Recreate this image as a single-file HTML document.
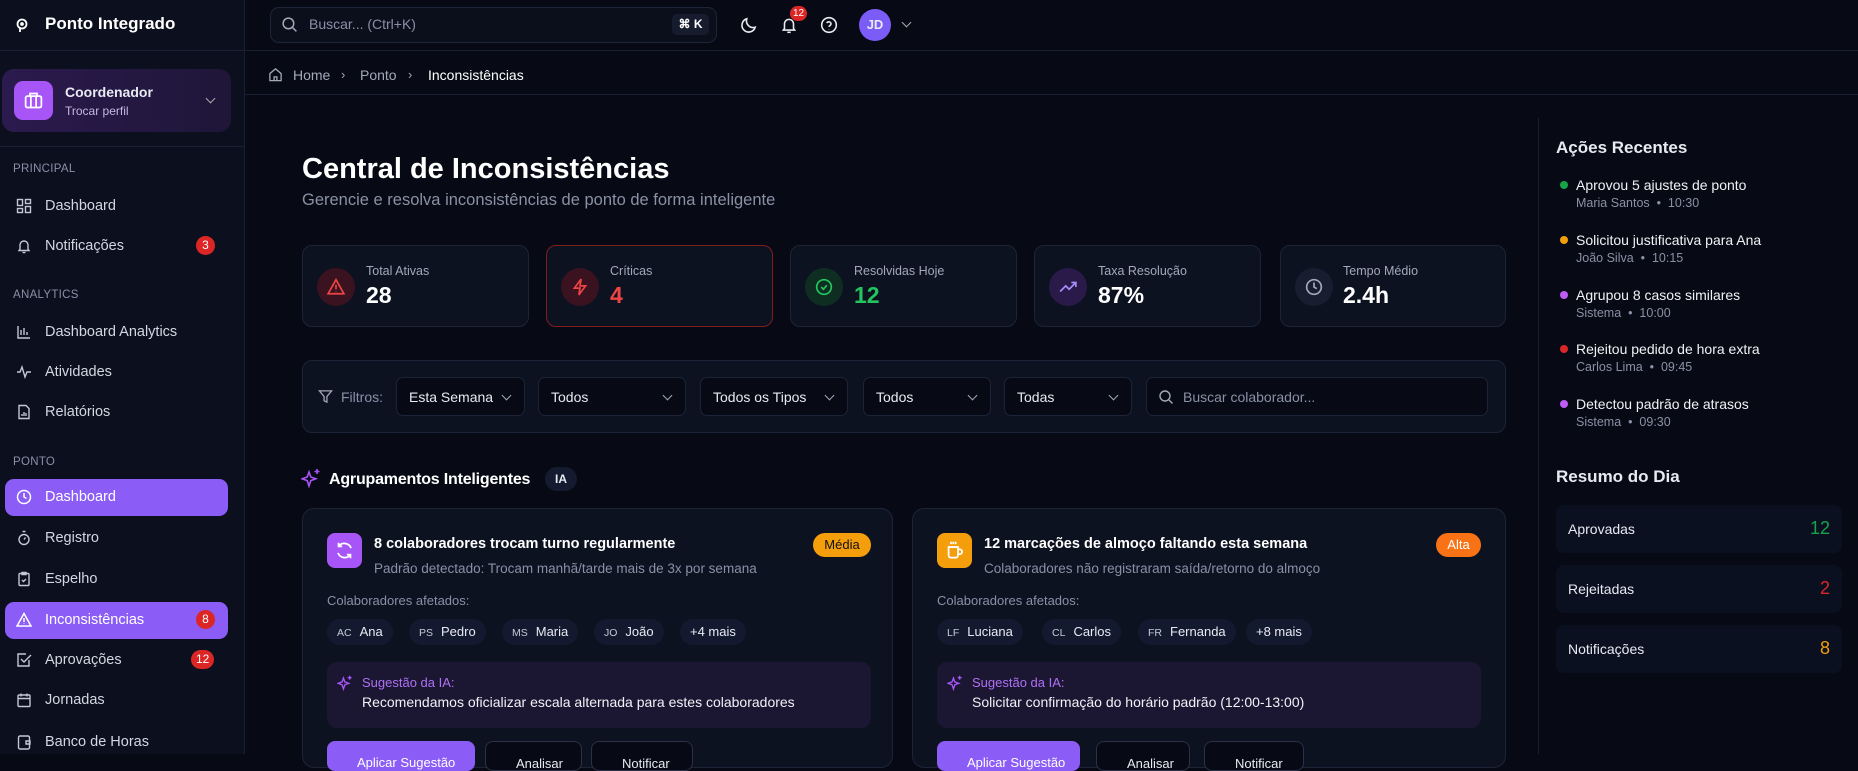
<!DOCTYPE html>
<html><head><meta charset="utf-8">
<style>
*{box-sizing:border-box;margin:0;padding:0}
body{width:1858px;height:754px;overflow:hidden;background:#070a14;font-family:"Liberation Sans",sans-serif;color:#e8eaf2;position:relative}
.a{position:absolute}
.sb{left:0;top:0;width:245px;height:754px;background:#0b0f1e;border-right:1px solid #1a2033}
.nav{position:absolute;left:0;width:245px;font-size:14.5px;color:#d4d7e2;display:flex;align-items:center}
.nav svg{position:absolute;left:16px}
.nav span{position:absolute;left:45px}
.sec{position:absolute;left:13px;font-size:11.5px;color:#8a90a6;letter-spacing:.3px}
.badge{position:absolute;background:#dc2626;color:#fff;border-radius:10px;font-size:12px;height:19px;min-width:19px;text-align:center;line-height:19px;padding:0 5px}
.pill{position:absolute;left:5px;width:223px;height:37px;background:#8b5cf6;border-radius:9px}
.card{position:absolute;background:#0d1221;border:1px solid #1d2438;border-radius:10px}
.ic{position:absolute;border-radius:50%;width:38px;height:38px;display:flex;align-items:center;justify-content:center}
.lab{position:absolute;font-size:12.5px;color:#a3a8ba}
.val{position:absolute;font-size:23px;font-weight:bold}
.dd{position:absolute;top:377px;height:39px;background:#070a14;border:1px solid #1d2438;border-radius:7px;font-size:14px;color:#e8eaf2;padding:11px 12px}
.dd.c:after{content:"";position:absolute;right:14px;top:14px;width:6px;height:6px;border-right:1.5px solid #a3a8ba;border-bottom:1.5px solid #a3a8ba;transform:rotate(45deg)}
.chip{position:absolute;top:619px;height:26px;background:#131a30;border-radius:13px;font-size:13px;color:#e8eaf2;line-height:26px;padding:0 10px;white-space:nowrap}
.chip b{font-weight:normal;font-size:10.5px;color:#c6c9d6;margin-right:8px}
.rs{position:absolute;left:1556px;width:286px;height:48px;background:#0b1020;border-radius:8px;font-size:14px;padding:16px 12px;color:#e8eaf2}
.rs i{position:absolute;right:12px;top:13px;font-style:normal;font-size:18px}
.act{position:absolute;left:1560px}
.act .d{position:absolute;left:0;top:4px;width:8px;height:8px;border-radius:50%}
.act .t{position:absolute;left:16px;top:0;font-size:14px;white-space:nowrap;color:#f1f2f6}
.act .s{position:absolute;left:16px;top:19px;font-size:12.5px;white-space:nowrap;color:#8a90a6}
.btn{position:absolute;top:741px;height:30px;border-radius:8px;font-size:13px;padding:14px 0 0 30px;white-space:nowrap;overflow:hidden}
.bo{border:1px solid #2a3148;background:#070a14}
</style></head><body>

<div class="a sb"></div>
<svg class="a" style="left:14px;top:17px" width="16" height="16" viewBox="0 0 16 16" fill="none" stroke="#fff" stroke-width="1.8"><circle cx="8" cy="7" r="4.5"/><circle cx="8" cy="7" r="1" fill="#fff"/><path d="M6 11v4"/></svg>
<div class="a" style="left:45px;top:14px;font-size:17px;font-weight:bold;color:#fff">Ponto Integrado</div>
<div class="a" style="left:0;top:50px;width:245px;border-top:1px solid #1a2033"></div>
<div class="a" style="left:2px;top:69px;width:229px;height:63px;border-radius:12px;background:linear-gradient(90deg,#2b1a4e,#1f1638)"></div>
<div class="a" style="left:14px;top:81px;width:39px;height:39px;border-radius:9px;background:#a855f7"></div>
<svg class="a" style="left:23px;top:90px" width="21" height="21" viewBox="0 0 24 24" fill="none" stroke="#fff" stroke-width="2"><rect x="3" y="7" width="18" height="13" rx="2"/><path d="M8 7V4h8v3M9 7v13M15 7v13"/></svg>
<div class="a" style="left:65px;top:84px;font-size:14px;font-weight:bold">Coordenador</div>
<div class="a" style="left:65px;top:104px;font-size:12px;color:#c3b8e0">Trocar perfil</div>
<div class="a" style="left:207px;top:95px;width:7px;height:7px;border-right:1.5px solid #aaa;border-bottom:1.5px solid #aaa;transform:rotate(45deg)"></div>
<div class="a" style="left:0;top:146px;width:245px;border-top:1px solid #1a2033"></div>

<div class="sec" style="top:163px">PRINCIPAL</div>
<div class="nav" style="top:196px;height:20px"><svg width="16" height="16" viewBox="0 0 16 16" fill="none" stroke="#c4c8d4" stroke-width="1.4"><rect x="1.5" y="1.5" width="5" height="6"/><rect x="9.5" y="1.5" width="5" height="4"/><rect x="1.5" y="10.5" width="5" height="4"/><rect x="9.5" y="8.5" width="5" height="6"/></svg><span>Dashboard</span></div>
<div class="nav" style="top:236px;height:20px"><svg width="16" height="16" viewBox="0 0 16 16" fill="none" stroke="#c4c8d4" stroke-width="1.4"><path d="M4 11V7a4 4 0 018 0v4l1 1.5H3z"/><path d="M6.5 14.5h3"/></svg><span>Notificações</span></div>
<div class="badge" style="left:196px;top:236px">3</div>
<div class="sec" style="top:289px">ANALYTICS</div>
<div class="nav" style="top:322px;height:20px"><svg width="16" height="16" viewBox="0 0 16 16" fill="none" stroke="#c4c8d4" stroke-width="1.4"><path d="M2 2v12h12M5 11V6M8 11V4M11 11V8"/></svg><span>Dashboard Analytics</span></div>
<div class="nav" style="top:362px;height:20px"><svg width="16" height="16" viewBox="0 0 16 16" fill="none" stroke="#c4c8d4" stroke-width="1.4"><path d="M1 8h3l2-5 3 10 2-5h4"/></svg><span>Atividades</span></div>
<div class="nav" style="top:402px;height:20px"><svg width="16" height="16" viewBox="0 0 16 16" fill="none" stroke="#c4c8d4" stroke-width="1.4"><path d="M3 1.5h7l3 3v10H3z"/><path d="M6 12v-2M8 12V8M10 12v-3"/></svg><span>Relatórios</span></div>
<div class="sec" style="top:456px">PONTO</div>
<div class="pill" style="top:479px"></div>
<div class="nav" style="top:487px;height:20px;color:#fff"><svg width="16" height="16" viewBox="0 0 16 16" fill="none" stroke="#fff" stroke-width="1.5"><circle cx="8" cy="8" r="6.5"/><path d="M8 4v4l2.5 1.5"/></svg><span>Dashboard</span></div>
<div class="nav" style="top:528px;height:20px"><svg width="16" height="16" viewBox="0 0 16 16" fill="none" stroke="#c4c8d4" stroke-width="1.4"><circle cx="8" cy="9.5" r="5"/><path d="M6.5 1.5h3M8 9.5l1.5-2"/></svg><span>Registro</span></div>
<div class="nav" style="top:569px;height:20px"><svg width="16" height="16" viewBox="0 0 16 16" fill="none" stroke="#c4c8d4" stroke-width="1.4"><rect x="3" y="2.5" width="10" height="12" rx="1"/><path d="M6 1.5h4v2H6zM6 9l1.5 1.5L10 8"/></svg><span>Espelho</span></div>
<div class="pill" style="top:602px"></div>
<div class="nav" style="top:610px;height:20px;color:#fff"><svg width="16" height="16" viewBox="0 0 16 16" fill="none" stroke="#fff" stroke-width="1.5"><path d="M8 1.5l7 12.5H1z"/><path d="M8 6v4M8 11.5v.5"/></svg><span>Inconsistências</span></div>
<div class="badge" style="left:196px;top:610px">8</div>
<div class="nav" style="top:650px;height:20px"><svg width="16" height="16" viewBox="0 0 16 16" fill="none" stroke="#c4c8d4" stroke-width="1.4"><path d="M13 8v6H2V2h8"/><path d="M5 7l3 3 7-7"/></svg><span>Aprovações</span></div>
<div class="badge" style="left:191px;top:650px">12</div>
<div class="nav" style="top:690px;height:20px"><svg width="16" height="16" viewBox="0 0 16 16" fill="none" stroke="#c4c8d4" stroke-width="1.4"><rect x="2" y="3" width="12" height="11.5" rx="1"/><path d="M2 6.5h12M5 1.5v3M11 1.5v3"/></svg><span>Jornadas</span></div>
<div class="nav" style="top:732px;height:20px"><svg width="16" height="16" viewBox="0 0 16 16" fill="none" stroke="#c4c8d4" stroke-width="1.4"><rect x="2.5" y="2" width="11" height="13" rx="1.5"/><path d="M10 7h4v3h-4z"/></svg><span>Banco de Horas</span></div>

<div class="a" style="left:245px;top:50px;width:1613px;border-top:1px solid #1a2033"></div>
<div class="a" style="left:270px;top:7px;width:447px;height:36px;border:1px solid #1f2538;border-radius:9px;background:#0b0f1c"></div>
<svg class="a" style="left:281px;top:16px" width="17" height="17" viewBox="0 0 16 16" fill="none" stroke="#a3a8ba" stroke-width="1.4"><circle cx="7" cy="7" r="5"/><path d="M11 11l3.5 3.5"/></svg>
<div class="a" style="left:309px;top:16px;font-size:14px;color:#8a90a6">Buscar... (Ctrl+K)</div>
<div class="a" style="left:672px;top:14px;width:37px;height:21px;background:#161c2e;border-radius:5px;font-size:12px;color:#fff;text-align:center;line-height:21px;font-weight:bold">⌘ K</div>
<svg class="a" style="left:740px;top:16px" width="18" height="18" viewBox="0 0 16 16" fill="none" stroke="#e8eaf2" stroke-width="1.4"><path d="M13.5 10A6 6 0 016 2.5a6 6 0 107.5 7.5z"/></svg>
<svg class="a" style="left:780px;top:16px" width="18" height="18" viewBox="0 0 16 16" fill="none" stroke="#e8eaf2" stroke-width="1.4"><path d="M4 11V7a4 4 0 018 0v4l1 1.5H3z"/><path d="M6.5 14.5h3"/></svg>
<div class="a" style="left:790px;top:6px;width:17px;height:15px;border-radius:8px;background:#dc2626;font-size:10px;text-align:center;line-height:15px;color:#fff">12</div>
<svg class="a" style="left:820px;top:16px" width="18" height="18" viewBox="0 0 16 16" fill="none" stroke="#e8eaf2" stroke-width="1.4"><circle cx="8" cy="8" r="6.5"/><path d="M6 6.3a2 2 0 013.8.7c0 1.3-1.8 1.5-1.8 2.7M8 11.5v.3"/></svg>
<div class="a" style="left:859px;top:9px;width:32px;height:32px;border-radius:50%;background:#7c5cf6;font-size:13px;font-weight:bold;text-align:center;line-height:32px">JD</div>
<div class="a" style="left:903px;top:19px;width:7px;height:7px;border-right:1.5px solid #aaa;border-bottom:1.5px solid #aaa;transform:rotate(45deg)"></div>

<svg class="a" style="left:268px;top:67px" width="15" height="15" viewBox="0 0 16 16" fill="none" stroke="#a3a8ba" stroke-width="1.4"><path d="M2 7l6-5 6 5v7.5H2zM6.5 14.5v-4h3v4"/></svg>
<div class="a" style="left:293px;top:67px;font-size:14px;color:#a3a8ba">Home</div>
<div class="a" style="left:341px;top:67px;font-size:13px;color:#a3a8ba">›</div>
<div class="a" style="left:360px;top:67px;font-size:14px;color:#a3a8ba">Ponto</div>
<div class="a" style="left:408px;top:67px;font-size:13px;color:#a3a8ba">›</div>
<div class="a" style="left:428px;top:67px;font-size:14px;color:#fff">Inconsistências</div>
<div class="a" style="left:245px;top:94px;width:1613px;border-top:1px solid #1a2033"></div>

<div class="a" style="left:1538px;top:118px;height:636px;border-left:1px solid #1a2033"></div>
<div class="a" style="left:1556px;top:138px;font-size:17px;font-weight:bold">Ações Recentes</div>
<div class="act" style="top:177px"><div class="d" style="background:#16a34a"></div><div class="t">Aprovou 5 ajustes de ponto</div><div class="s">Maria Santos &nbsp;•&nbsp; 10:30</div></div>
<div class="act" style="top:232px"><div class="d" style="background:#f59e0b"></div><div class="t">Solicitou justificativa para Ana</div><div class="s">João Silva &nbsp;•&nbsp; 10:15</div></div>
<div class="act" style="top:287px"><div class="d" style="background:#c05cf6"></div><div class="t">Agrupou 8 casos similares</div><div class="s">Sistema &nbsp;•&nbsp; 10:00</div></div>
<div class="act" style="top:341px"><div class="d" style="background:#dc2626"></div><div class="t">Rejeitou pedido de hora extra</div><div class="s">Carlos Lima &nbsp;•&nbsp; 09:45</div></div>
<div class="act" style="top:396px"><div class="d" style="background:#c05cf6"></div><div class="t">Detectou padrão de atrasos</div><div class="s">Sistema &nbsp;•&nbsp; 09:30</div></div>
<div class="a" style="left:1556px;top:467px;font-size:17px;font-weight:bold">Resumo do Dia</div>
<div class="rs" style="top:505px">Aprovadas<i style="color:#16a34a">12</i></div>
<div class="rs" style="top:565px">Rejeitadas<i style="color:#dc2626">2</i></div>
<div class="rs" style="top:625px">Notificações<i style="color:#f59e0b">8</i></div>

<div class="a" style="left:302px;top:153px;font-size:29px;font-weight:bold;color:#fff">Central de Inconsistências</div>
<div class="a" style="left:302px;top:191px;font-size:16.5px;color:#8a90a6">Gerencie e resolva inconsistências de ponto de forma inteligente</div>

<div class="card" style="left:302px;top:245px;width:227px;height:82px"></div>
<div class="ic" style="left:317px;top:268px;background:#3a1220"><svg width="18" height="18" viewBox="0 0 16 16" fill="none" stroke="#ef4444" stroke-width="1.5"><path d="M8 1.5l7 12.5H1z"/><path d="M8 6v4M8 11.5v.5"/></svg></div>
<div class="lab" style="left:366px;top:264px">Total Ativas</div><div class="val" style="left:366px;top:282px;color:#fff">28</div>

<div class="card" style="left:546px;top:245px;width:227px;height:82px;border-color:#7f1d1d"></div>
<div class="ic" style="left:561px;top:268px;background:#3a1220"><svg width="18" height="18" viewBox="0 0 16 16" fill="none" stroke="#ef4444" stroke-width="1.5"><path d="M9 1L3 9h5l-1 6 6-8H8z"/></svg></div>
<div class="lab" style="left:610px;top:264px">Críticas</div><div class="val" style="left:610px;top:282px;color:#ef4444">4</div>

<div class="card" style="left:790px;top:245px;width:227px;height:82px"></div>
<div class="ic" style="left:805px;top:268px;background:#0f2e22"><svg width="18" height="18" viewBox="0 0 16 16" fill="none" stroke="#22c55e" stroke-width="1.5"><circle cx="8" cy="8" r="6.5"/><path d="M5.5 8l2 2 3-3.5"/></svg></div>
<div class="lab" style="left:854px;top:264px">Resolvidas Hoje</div><div class="val" style="left:854px;top:282px;color:#22c55e">12</div>

<div class="card" style="left:1034px;top:245px;width:227px;height:82px"></div>
<div class="ic" style="left:1049px;top:268px;background:#2a1a4a"><svg width="18" height="18" viewBox="0 0 16 16" fill="none" stroke="#a78bfa" stroke-width="1.5"><path d="M1 12l5-5 3 3 6-6M11 4h4v4"/></svg></div>
<div class="lab" style="left:1098px;top:264px">Taxa Resolução</div><div class="val" style="left:1098px;top:282px;color:#fff">87%</div>

<div class="card" style="left:1280px;top:245px;width:226px;height:82px"></div>
<div class="ic" style="left:1295px;top:268px;background:#181e30"><svg width="18" height="18" viewBox="0 0 16 16" fill="none" stroke="#a3a8ba" stroke-width="1.5"><circle cx="8" cy="8" r="6.5"/><path d="M8 4v4l2.5 1.5"/></svg></div>
<div class="lab" style="left:1343px;top:264px">Tempo Médio</div><div class="val" style="left:1343px;top:282px;color:#fff">2.4h</div>

<div class="card" style="left:302px;top:360px;width:1204px;height:73px"></div>
<svg class="a" style="left:318px;top:389px" width="15" height="15" viewBox="0 0 16 16" fill="none" stroke="#a3a8ba" stroke-width="1.4"><path d="M1.5 2h13l-5 6v6l-3-1.5V8z"/></svg>
<div class="a" style="left:341px;top:389px;font-size:14px;color:#8a90a6">Filtros:</div>
<div class="dd c" style="left:396px;width:129px">Esta Semana</div>
<div class="dd c" style="left:538px;width:148px">Todos</div>
<div class="dd c" style="left:700px;width:148px">Todos os Tipos</div>
<div class="dd c" style="left:863px;width:128px">Todos</div>
<div class="dd c" style="left:1004px;width:128px">Todas</div>
<div class="dd" style="left:1146px;width:342px;padding-left:36px;color:#8a90a6">Buscar colaborador...</div>
<svg class="a" style="left:1158px;top:389px" width="16" height="16" viewBox="0 0 16 16" fill="none" stroke="#a3a8ba" stroke-width="1.4"><circle cx="7" cy="7" r="5"/><path d="M11 11l3.5 3.5"/></svg>

<svg class="a" style="left:301px;top:468px" width="20" height="22" viewBox="0 0 20 22" fill="none" stroke="#a855f7" stroke-width="1.6"><path d="M8 4l1.8 5 5 1.8-5 1.8L8 18l-1.8-5.4-5-1.8 5-1.8z"/><path d="M16 1v5M13.5 3.5h5"/></svg>
<div class="a" style="left:329px;top:471px;font-size:16px;font-weight:bold;color:#fff;letter-spacing:-.2px">Agrupamentos Inteligentes</div>
<div class="a" style="left:545px;top:467px;width:32px;height:24px;border-radius:12px;background:#141b30;font-size:12px;font-weight:bold;text-align:center;line-height:24px">IA</div>

<div class="card" style="left:302px;top:508px;width:591px;height:260px;border-radius:12px"></div>
<div class="a" style="left:327px;top:533px;width:35px;height:35px;border-radius:8px;background:#a855f7"></div>
<svg class="a" style="left:335px;top:541px" width="19" height="19" viewBox="0 0 16 16" fill="none" stroke="#fff" stroke-width="1.5"><path d="M13.5 6A6 6 0 003 4.5M2.5 10A6 6 0 0013 11.5M3 1.5v3h3M13 14.5v-3h-3"/></svg>
<div class="a" style="left:374px;top:536px;font-size:14.5px;font-weight:bold;color:#fff">8 colaboradores trocam turno regularmente</div>
<div class="a" style="left:374px;top:561px;font-size:13.5px;color:#8a90a6">Padrão detectado: Trocam manhã/tarde mais de 3x por semana</div>
<div class="a" style="left:813px;top:533px;width:58px;height:24px;border-radius:12px;background:#f59e0b;color:#111;font-size:13px;text-align:center;line-height:24px">Média</div>
<div class="a" style="left:327px;top:593px;font-size:13px;color:#8a90a6">Colaboradores afetados:</div>
<div class="chip" style="left:327px"><b>AC</b>Ana</div>
<div class="chip" style="left:409px"><b>PS</b>Pedro</div>
<div class="chip" style="left:502px"><b>MS</b>Maria</div>
<div class="chip" style="left:594px"><b>JO</b>João</div>
<div class="chip" style="left:680px">+4 mais</div>
<div class="a" style="left:327px;top:662px;width:544px;height:66px;border-radius:10px;background:#1b1733"></div>
<svg class="a" style="left:337px;top:675px" width="16" height="17" viewBox="0 0 20 22" fill="none" stroke="#a855f7" stroke-width="1.8"><path d="M8 4l1.8 5 5 1.8-5 1.8L8 18l-1.8-5.4-5-1.8 5-1.8z"/><path d="M16 1v5M13.5 3.5h5"/></svg>
<div class="a" style="left:362px;top:675px;font-size:13px;color:#b070f5">Sugestão da IA:</div>
<div class="a" style="left:362px;top:694px;font-size:14px;color:#f1f2f6">Recomendamos oficializar escala alternada para estes colaboradores</div>
<div class="btn" style="left:327px;width:148px;background:#8b5cf6;color:#fff">Aplicar Sugestão</div>
<div class="btn bo" style="left:485px;width:97px">Analisar</div>
<div class="btn bo" style="left:591px;width:102px">Notificar</div>

<div class="card" style="left:912px;top:508px;width:594px;height:260px;border-radius:12px"></div>
<div class="a" style="left:937px;top:533px;width:35px;height:35px;border-radius:8px;background:#f59e0b"></div>
<svg class="a" style="left:945px;top:540px" width="19" height="20" viewBox="0 0 16 17" fill="none" stroke="#fff" stroke-width="1.5"><path d="M3 6h8v7a2 2 0 01-2 2H5a2 2 0 01-2-2zM11 8h1.5a2 2 0 010 4H11M5 1.5v2M7 1.5v2M9 1.5v2"/></svg>
<div class="a" style="left:984px;top:536px;font-size:14.5px;font-weight:bold;color:#fff">12 marcações de almoço faltando esta semana</div>
<div class="a" style="left:984px;top:561px;font-size:13.5px;color:#8a90a6">Colaboradores não registraram saída/retorno do almoço</div>
<div class="a" style="left:1436px;top:533px;width:45px;height:24px;border-radius:12px;background:#f97316;color:#fff;font-size:13px;text-align:center;line-height:24px">Alta</div>
<div class="a" style="left:937px;top:593px;font-size:13px;color:#8a90a6">Colaboradores afetados:</div>
<div class="chip" style="left:937px"><b>LF</b>Luciana</div>
<div class="chip" style="left:1042px"><b>CL</b>Carlos</div>
<div class="chip" style="left:1138px"><b>FR</b>Fernanda</div>
<div class="chip" style="left:1246px">+8 mais</div>
<div class="a" style="left:937px;top:662px;width:544px;height:66px;border-radius:10px;background:#1b1733"></div>
<svg class="a" style="left:947px;top:675px" width="16" height="17" viewBox="0 0 20 22" fill="none" stroke="#a855f7" stroke-width="1.8"><path d="M8 4l1.8 5 5 1.8-5 1.8L8 18l-1.8-5.4-5-1.8 5-1.8z"/><path d="M16 1v5M13.5 3.5h5"/></svg>
<div class="a" style="left:972px;top:675px;font-size:13px;color:#b070f5">Sugestão da IA:</div>
<div class="a" style="left:972px;top:694px;font-size:14px;color:#f1f2f6">Solicitar confirmação do horário padrão (12:00-13:00)</div>
<div class="btn" style="left:937px;width:143px;background:#8b5cf6;color:#fff">Aplicar Sugestão</div>
<div class="btn bo" style="left:1096px;width:94px">Analisar</div>
<div class="btn bo" style="left:1204px;width:100px">Notificar</div>
</body></html>
